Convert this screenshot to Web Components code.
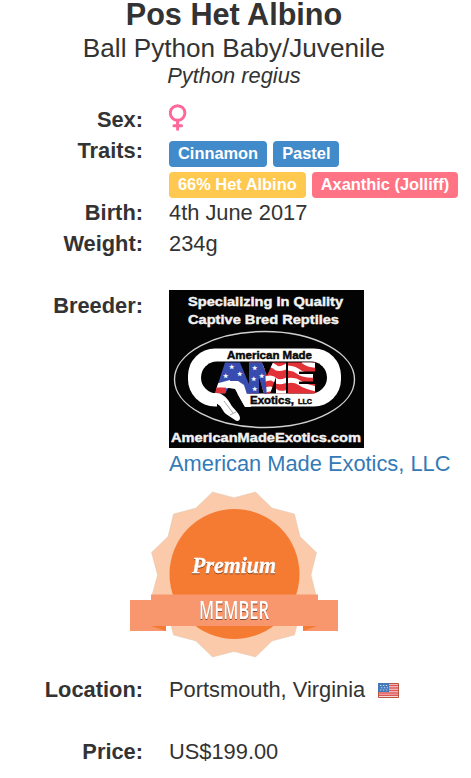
<!DOCTYPE html>
<html lang="en"><head><meta charset="utf-8"><title>Pos Het Albino</title>
<style>
body{margin:0;background:#fff;color:#333;font:21.84px/31px "Liberation Sans",Arial,sans-serif;width:471px;height:778px;overflow:hidden}
</style></head><body>
<animal-card></animal-card>
<script>
const define=(name,html)=>customElements.define(name,class extends HTMLElement{
  constructor(){super();const t=document.createElement('template');t.innerHTML=html;this.attachShadow({mode:'open'}).append(t.content.cloneNode(true));}
});
define('animal-heading',`<style>:host{display:block;text-align:center;width:468px;height:104px}
h1,h2,p{margin:0;font-weight:400}h1{font-size:30.6px;line-height:29px;height:30px;font-weight:700}h2{font-size:26.15px;line-height:30px;padding-top:3px}p{font-size:21.84px;line-height:26px;font-style:italic}</style>
<h1><slot name="name"></slot></h1><h2><slot name="kind"></slot></h2><p><slot name="species"></slot></p>`);
define('detail-row',`<style>:host{display:grid;grid-template-columns:143px 1fr;column-gap:26px;min-height:31px}b{text-align:right}div{min-width:0}</style>
<b><slot name="label"></slot></b><div><slot></slot></div>`);
define('trait-list',`<style>:host{display:flex;flex-wrap:wrap;column-gap:6px;row-gap:5px;padding:6px 0 0;height:56px;align-content:flex-start}</style><slot></slot>`);
define('trait-pill',`<style>:host{display:block;box-sizing:border-box;height:26px;border-radius:4px;padding:0 9px;color:#fff;background:var(--pill,#428bca);font-size:16.4px;line-height:24px;font-weight:700;white-space:nowrap}</style><slot></slot>`);
define('female-icon',`<style>:host{display:block;height:31px}svg{display:block}</style>
<svg width="19" height="31" viewBox="0 0 19 31" fill="none" stroke="#ff6699" stroke-linecap="round"><circle cx="8.6" cy="9" r="7.3" stroke-width="2.9"/><path d="M8.6 17v8.2M4.9 21.8h7.600" stroke-width="3"/></svg>`);
define('breeder-logo',`<style>:host{display:block;width:195px;height:158px}svg{display:block}text{font-family:"Liberation Sans",sans-serif;font-weight:700;stroke-width:.45px}</style>
<svg width="195" height="158" viewBox="0 0 195 158"><defs>
<clipPath id="a"><path d="M46 103L56 72.500h15l10 24v7H69l-3-8h-5l-5 8z"/></clipPath>
<clipPath id="m"><path d="M80 103.500V72.500h13l5 13 6-13h13v31h-10V87l-6 16.500h-6L90 87v16.500z"/></clipPath>
<clipPath id="e"><path d="M119 103.500V72.500h27v9h-16v2.500h14v7.500h-14V94h16v9.500z"/></clipPath></defs>
<rect width="195" height="158" fill="#030303"/>
<g fill="#f2f2f2" stroke="#f2f2f2"><text x="19" y="15.5" font-size="13.500" textLength="155" lengthAdjust="spacingAndGlyphs">Specializing In Quality</text>
<text x="19" y="33.5" font-size="13.500" textLength="151" lengthAdjust="spacingAndGlyphs">Captive Bred Reptiles</text>
<text x="2" y="151.5" font-size="13.500" textLength="190" lengthAdjust="spacingAndGlyphs">AmericanMadeExotics.com</text></g>
<ellipse cx="95.5" cy="89.5" rx="90" ry="48" fill="none" stroke="#d0d0d0" stroke-width="1.4"/>
<rect x="19" y="58.500" width="153" height="58" rx="27" fill="#fff"/>
<rect x="32" y="71.500" width="126" height="32" rx="16" fill="#030303"/>
<path d="M48 112q-2-9 6-9h14l8 14H48z" fill="#030303"/>
<g clip-path="url(#a)"><path fill="#384caf" d="M40 70h42v36H40z"/><path fill="#fff" d="M46 94l15-4v8l-15 1z"/><path fill="#e23137" d="M43 98l14-1v7H43z"/></g>
<g clip-path="url(#m)"><path fill="#e23137" d="M78 70h40v36H78z"/><path fill="none" stroke="#fff" stroke-width="5" d="M94 77q8-4 12 0t14-2M94 90q8-4 12 0t14-1M94 101q8-4 12 0t14 1"/><path fill="#384caf" d="M78 70h17l3 36H78z"/></g>
<g clip-path="url(#e)"><path fill="#e23137" d="M117 70h32v36h-32z"/><path fill="none" stroke="#fff" stroke-width="5" d="M117 78q8 0 13 4t18 3M117 91q8-2 14 2t17 6M134 71q7 5 15 4"/></g>
<g fill="#fff" font-size="6" text-anchor="middle"><text x="62" y="79">★</text><text x="56" y="88">★</text><text x="70" y="86">★</text><text x="85" y="80">★</text><text x="84" y="91">★</text><text x="85" y="101">★</text><text x="92" y="88">★</text></g>
<path d="M51 94l9-3h9l6 4 7 22h-6l-10-18-6-1-10-1z" fill="#fff"/>
<path d="M35 103h12c5 0 10 3 14 10 3 6 10 10 10 15 0 3-3 4-5 2l-9-6c-4-3-4-9-11-11-6-1-12-4-16-8z" fill="#fff"/>
<path d="M55 111l9 12M61 125l6-3" stroke="#aaa" fill="none"/>
<g fill="#080808" stroke="#080808"><text x="58" y="69" font-size="11" textLength="85" lengthAdjust="spacingAndGlyphs">American Made</text>
<text x="81" y="114" font-size="11" textLength="44" lengthAdjust="spacingAndGlyphs">Exotics,</text><text x="129" y="114" font-size="7.500" textLength="14" lengthAdjust="spacingAndGlyphs">LLC</text></g></svg>`);
define('member-badge',`<style>:host{display:block;width:468px;height:168px}svg{display:block;margin:0 auto}text{fill:#fff;filter:drop-shadow(.6px 1px .6px #0007)}</style>
<svg width="208" height="168" viewBox="0 0 208 168">
<path fill="#facaaa" stroke="#d9c2b0" stroke-width=".4" d="M82.5 2L104 7.7 125.500 2 142 18 164.500 24 170 46.500 186.500 62.500 181 85 186.500 107 170 123 164.500 145 142 151 125.500 167 104 161.500 82.500 167 66 151 43.500 145 38 123 21.500 107 27.500 85 21.500 62.500 38 46.500 43.500 24 66 18z"/>
<circle cx="104.500" cy="84" r="65" fill="#f67b32"/>
<path fill="#fff" d="M21 136h20v5H21zM173 136h14v5h-14z"/>
<path fill="#f8976d" d="M0 110h36v31H0zM173 110h35v31h-35z"/><path fill="#f67b32" d="M21 136h15v5zM173 136h14l-14 5z"/>
<path fill="#f8976d" d="M21 104.500h167V136H21z"/>
<text x="62" y="83" font-family="Liberation Serif,serif" font-size="24" font-style="italic" font-weight="700" stroke="#fff" stroke-width=".4" textLength="84" lengthAdjust="spacingAndGlyphs">Premium</text>
<text x="69" y="129" font-family="Open Sans,sans-serif" font-size="25.500" font-weight="600" textLength="70" lengthAdjust="spacingAndGlyphs">MEMBER</text></svg>`);
define('us-flag',`<style>:host{display:inline-block;width:22px;height:16px;margin-left:6.500px;vertical-align:-1px}svg{display:block}</style>
<svg width="22" height="16" viewBox="0 0 22 16"><path fill="#f3dada" d="M0 1h21v15H0z"/><path stroke="#e05555" stroke-width="1.4" d="M0 3.500h21M0 6h21M0 8.500h21M0 11h21M0 13.300h21"/><path fill="#4477b7" d="M0 1h11v9H0z"/><path stroke="#c4dcef" stroke-width="1.1" stroke-dasharray="1.4 1.500" d="M2 3.500h8M3 5.700h7M2 8h8"/><path fill="none" stroke="#b85440" stroke-width="1" d="M11 1.500h9.500v14H.5V10"/></svg>`);
define('animal-card',`<style>:host{display:block;width:471px}a{color:#337ab7;text-decoration:none;display:block;white-space:nowrap}.breeder{margin-top:31px}.badge{margin-top:11px}.location{margin-top:16px}.price{margin-top:31px}</style>
<animal-heading><span slot="name">Pos Het Albino</span><span slot="kind">Ball Python Baby/Juvenile</span><span slot="species">Python regius</span></animal-heading>
<detail-row><span slot="label">Sex:</span><female-icon></female-icon></detail-row>
<detail-row><span slot="label">Traits:</span><trait-list><trait-pill>Cinnamon</trait-pill><trait-pill>Pastel</trait-pill><trait-pill style="--pill:#ffc84f">66% Het Albino</trait-pill><trait-pill style="--pill:#ff7385">Axanthic (Jolliff)</trait-pill></trait-list></detail-row>
<detail-row><span slot="label">Birth:</span>4th June 2017</detail-row>
<detail-row><span slot="label">Weight:</span>234g</detail-row>
<detail-row class="breeder"><span slot="label">Breeder:</span><breeder-logo></breeder-logo><a>American Made Exotics, LLC</a></detail-row>
<member-badge class="badge"></member-badge>
<detail-row class="location"><span slot="label">Location:</span>Portsmouth, Virginia <us-flag></us-flag></detail-row>
<detail-row class="price"><span slot="label">Price:</span>US$199.00</detail-row>`);
</script></body></html>
